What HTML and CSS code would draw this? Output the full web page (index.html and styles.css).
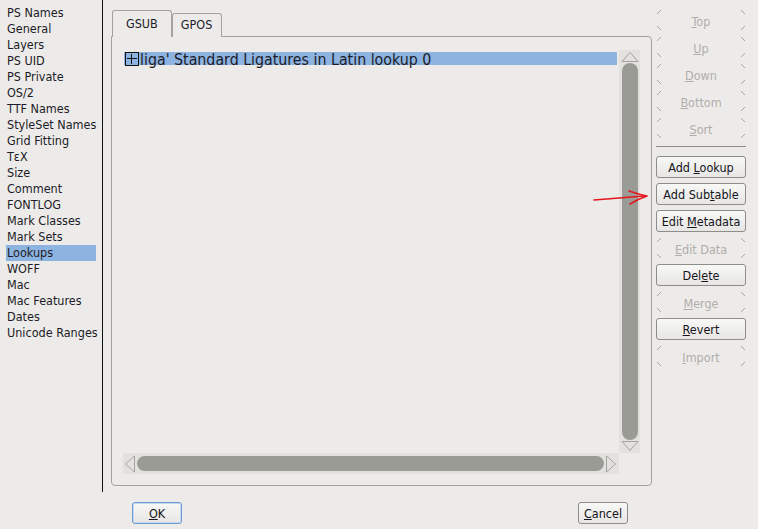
FILE: index.html
```html
<!DOCTYPE html>
<html lang="en">

<head>
  <meta charset="UTF-8" />
  <title>Font Info - Lookups</title>
  <link rel="stylesheet" href="styles.css">
</head>

<body>
  <div class="window">
    <ul class="sidebar">
      <li>PS Names</li>
      <li>General</li>
      <li>Layers</li>
      <li>PS UID</li>
      <li>PS Private</li>
      <li>OS/2</li>
      <li>TTF Names</li>
      <li>StyleSet Names</li>
      <li>Grid Fitting</li>
      <li>TεX</li>
      <li>Size</li>
      <li>Comment</li>
      <li>FONTLOG</li>
      <li>Mark Classes</li>
      <li>Mark Sets</li>
      <li class="selected">Lookups</li>
      <li>WOFF</li>
      <li>Mac</li>
      <li>Mac Features</li>
      <li>Dates</li>
      <li>Unicode Ranges</li>
    </ul>

    <div class="main">
      <div class="top">
        <div class="notebook">
          <div class="tabs">
            <span class="tab active">GSUB</span>
            <span class="tab">GPOS</span>
          </div>
          <div class="panel">
            <div class="lookups">
              <div class="list">
                <div class="row">
                  <span class="expander"></span>
                  <span class="label">liga' Standard Ligatures in Latin lookup 0</span>
                </div>
              </div>
              <div class="vscroll">
                <svg class="arrow-v" width="18" height="11" viewBox="0 0 18 11">
                  <path d="M1 10.5 L9 1.5 L17 10.5 Z" fill="none" stroke="#a3a39f" stroke-width="1" />
                </svg>
                <div class="thumb"></div>
                <svg class="arrow-v" width="18" height="11" viewBox="0 0 18 11">
                  <path d="M1 0.5 L9 9.5 L17 0.5 Z" fill="none" stroke="#a3a39f" stroke-width="1" />
                </svg>
              </div>
              <div class="hscroll">
                <svg class="arrow-h" width="11" height="18" viewBox="0 0 11 18">
                  <path d="M10.5 1 L1.5 9 L10.5 17 Z" fill="none" stroke="#a3a39f" stroke-width="1" />
                </svg>
                <div class="thumb"></div>
                <svg class="arrow-h" width="11" height="18" viewBox="0 0 11 18">
                  <path d="M0.5 1 L9.5 9 L0.5 17 Z" fill="none" stroke="#a3a39f" stroke-width="1" />
                </svg>
              </div>
              <div class="corner"></div>
            </div>
          </div>
        </div>

        <div class="actions">
          <span class="btn disabled"><u>T</u>op</span>
          <span class="btn disabled"><u>U</u>p</span>
          <span class="btn disabled"><u>D</u>own</span>
          <span class="btn disabled"><u>B</u>ottom</span>
          <span class="btn disabled"><u>S</u>ort</span>
          <hr class="sep">
          <span class="btn">Add <u>L</u>ookup</span>
          <span class="btn">Add Sub<u>t</u>able</span>
          <span class="btn">Edit <u>M</u>etadata</span>
          <span class="btn disabled"><u>E</u>dit Data</span>
          <span class="btn">Del<u>e</u>te</span>
          <span class="btn disabled"><u>M</u>erge</span>
          <span class="btn"><u>R</u>evert</span>
          <span class="btn disabled"><u>I</u>mport</span>
        </div>
      </div>

      <div class="footer">
        <span class="btn focused"><u>O</u>K</span>
        <span class="btn"><u>C</u>ancel</span>
      </div>
    </div>

    <!-- hand-drawn pointer at Add Subtable -->
    <svg class="mark" width="60" height="20" viewBox="0 0 60 20">
      <path d="M2 11 C14 10 28 9 52 7" fill="none" stroke="#e3161d" stroke-width="1.6" stroke-linecap="round" />
      <path d="M37 2 C43 4 49 6 55 7 C49 9 43 12 38 15" fill="none" stroke="#e3161d" stroke-width="1.6" stroke-linecap="round" stroke-linejoin="round" />
    </svg>
  </div>
</body>

</html>
```

FILE: styles.css
```css
body {
  margin: 0;
  padding: 0;
  background-color: #edebe9;
  color: #1c1c28;
  font-family: "DejaVu Sans Condensed", "DejaVu Sans", sans-serif;
  font-size: 12.5px;
}

.window {
  position: relative;
  display: flex;
  width: 758px;
  height: 529px;
  overflow: hidden;
}

.sidebar {
  list-style: none;
  margin: 0;
  padding: 5px 0 0 0;
  width: 102px;
  height: 487px;
  border-right: 1px solid #111;
}

.sidebar li {
  height: 16px;
  line-height: 16px;
  margin: 0 6px 0 -1px;
  padding-left: 8px;
  white-space: nowrap;
}

.sidebar .selected {
  background-color: #8db3e0;
  margin-left: 6px;
  padding-left: 1px;
}

.main {
  display: flex;
  flex-direction: column;
}

.top {
  display: flex;
}

.notebook {
  margin: 10px 0 0 8px;
  width: 541px;
}

.tabs {
  display: flex;
  align-items: flex-end;
  height: 27px;
  margin-bottom: -1px;
  position: relative;
  z-index: 1;
}

.tab {
  box-sizing: border-box;
  height: 24px;
  padding: 0 9px 0 8px;
  line-height: 22px;
  border: 1px solid #a3a29f;
  border-bottom: none;
  border-radius: 3px 3px 0 0;
  background-color: #edebe9;
}

.tab.active {
  height: 27px;
  line-height: 26px;
  margin-left: 1px;
  padding: 0 13px;
}

.panel {
  box-sizing: border-box;
  height: 450px;
  padding: 13px 11px 11px 11px;
  border: 1px solid #a3a29f;
  border-radius: 0 4px 4px 4px;
}

.lookups {
  display: grid;
  grid-template-columns: 496px 21px;
  grid-template-rows: 403px 21px;
}

.list {
  padding: 2px 2px 0 1px;
}

.row {
  display: flex;
  align-items: flex-start;
  height: 13px;
  background-color: #8db3e0;
  white-space: nowrap;
}

.label {
  font-size: 15.8px;
  line-height: 16px;
  color: #1c1c28;
}

.expander {
  position: relative;
  flex: none;
  box-sizing: border-box;
  width: 14px;
  height: 14px;
  margin-left: 1px;
  margin-right: 1px;
  border: 1px solid #111;
}

.expander::before,
.expander::after {
  content: "";
  position: absolute;
  background-color: #111;
}

.expander::before {
  left: 1px;
  right: 1px;
  top: 5px;
  height: 1px;
}

.expander::after {
  top: 1px;
  bottom: 1px;
  left: 5px;
  width: 1px;
}

.vscroll {
  display: flex;
  flex-direction: column;
  align-items: center;
  background-color: #e3e1de;
  padding: 1px 0;
}

.vscroll .thumb {
  flex: 1;
  width: 16px;
  margin: 1px 0;
  border-radius: 8px;
  background-color: #9b9b95;
}

.hscroll {
  display: flex;
  align-items: center;
  background-color: #e3e1de;
  padding: 0 2px 0 1px;
}

.hscroll .thumb {
  flex: 1;
  height: 15px;
  margin: 0 2px;
  border-radius: 8px;
  background-color: #9b9b95;
}

.arrow-v,
.arrow-h {
  display: block;
  flex: none;
}

.actions {
  display: flex;
  flex-direction: column;
  gap: 5px;
  width: 90px;
  margin-left: 4px;
  padding-top: 9px;
}

.btn {
  box-sizing: border-box;
  display: block;
  height: 22px;
  padding-top: 2px;
  line-height: 18px;
  text-align: center;
  border: 1px solid #8e8d8a;
  border-radius: 3px;
  background: linear-gradient(#f8f8f7, #e7e6e4);
  color: #151520;
  white-space: nowrap;
}

.btn.disabled {
  padding-top: 3px;
  border-color: transparent;
  color: #b0aeab;
  background:
    linear-gradient(to bottom right, transparent 40%, #a9a8a5 40%, #a9a8a5 60%, transparent 60%) left top / 4px 4px no-repeat,
    linear-gradient(to bottom left, transparent 40%, #a9a8a5 40%, #a9a8a5 60%, transparent 60%) right top / 4px 4px no-repeat,
    linear-gradient(to bottom left, transparent 40%, #a9a8a5 40%, #a9a8a5 60%, transparent 60%) left bottom / 4px 4px no-repeat,
    linear-gradient(to bottom right, transparent 40%, #a9a8a5 40%, #a9a8a5 60%, transparent 60%) right bottom / 4px 4px no-repeat;
}

.sep {
  margin: 2px 0 4px 0;
  height: 0;
  border: none;
  border-top: 1px solid #8e8d8a;
}

.footer {
  display: flex;
  justify-content: space-between;
  width: 541px;
  margin: 16px 0 0 8px;
  padding: 0 24px 0 21px;
  box-sizing: border-box;
}

.footer .btn {
  width: 50px;
}

.btn.focused {
  border-color: #6c9bd6;
  box-shadow: inset 0 0 0 1px #c4d7ef;
}

.mark {
  position: absolute;
  left: 592px;
  top: 189px;
}
```
